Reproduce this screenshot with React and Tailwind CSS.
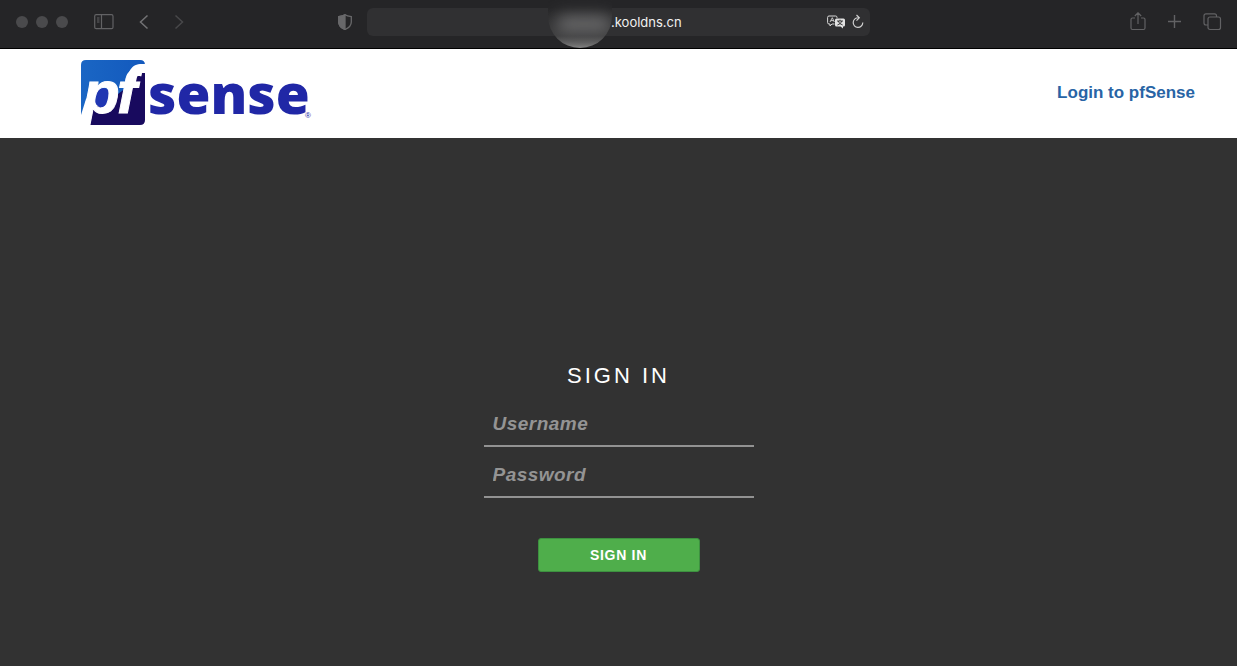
import React, { useState } from 'react';

function PfSenseLogo() {
  return (
    <svg className="h-[70px] w-[236px] overflow-visible" viewBox="0 0 236 70" role="img" aria-label="pfSense">
      <defs>
        <linearGradient id="tile" x1="0" y1="0" x2="1" y2="0">
          <stop offset="0" stopColor="#1a66c4" />
          <stop offset="1" stopColor="#1359bd" />
        </linearGradient>
      </defs>
      {/* tile */}
      <path d="M1 6 Q1 1 6 1 H60 Q65 1 65 6 V9 L50 24 L40 38 H10 L6 40 L1 56 Z" fill="url(#tile)" />
      <path d="M65 14 V61 Q65 66 60 66 H7 L11 46 L30 50 L34 38 L50 26 L54 14 Z" fill="#180a5e" />
      <ellipse cx="23" cy="39" rx="9" ry="10" fill="#2036b2" />
      {/* hook of the f, runs off the right edge */}
      <path d="M45 28 C48 12 51 5 62 5 H66 V13 H62 C57 13 57 19 55 28 Z" fill="#fff" />
      <g fontFamily="Liberation Sans, sans-serif" fontSize="60" fontWeight="700" fontStyle="italic" fill="#fff" stroke="#fff" strokeWidth="1">
        <text x="3" y="54">p</text>
        <text x="37" y="54">f</text>
      </g>
      <text x="68" y="55" fontFamily="Open Sans, sans-serif" fontSize="55" fontWeight="800" fill="#2027a6">sense</text>
      <text x="225" y="59" fontFamily="Liberation Sans, sans-serif" fontSize="8" fill="#2027a6">®</text>
    </svg>
  );
}

function ShieldIcon() {
  return (
    <svg className="h-4 w-4" viewBox="0 0 16 16" fill="none" stroke="#68686a" strokeWidth="1.3">
      <path d="M8 .8 C10 2.2 12 2.4 14.3 2.6 V8 C14.3 12 11.5 14 8 15.5 C4.5 14 1.7 12 1.7 8 V2.6 C4 2.4 6 2.2 8 .8 Z" />
      <path d="M8 .8 C6 2.2 4 2.4 1.7 2.6 V8 C1.7 12 4.5 14 8 15.5 Z" fill="#68686a" />
    </svg>
  );
}

function TranslateIcon() {
  return (
    <svg className="h-4 w-[18px]" viewBox="0 0 18 16" fill="none">
      <path d="M7.5 10 H5 L3 12 V10 H2 Q.6 10 .6 8.6 V3.4 Q.6 2 2 2 H8.6 Q10 2 10 3.4 V4" stroke="#d8d8d8" />
      <path d="M3 8 L5.3 3.7 L7.3 8 M4 6.6 H6.6" stroke="#d8d8d8" strokeWidth="0.9" />
      <path d="M9.5 4.5 H16.5 Q18 4.5 18 6 V11 Q18 12.5 16.5 12.5 H16 V14.5 L13.5 12.5 H9.5 Q8 12.5 8 11 V6 Q8 4.5 9.5 4.5 Z" fill="#e2e2e2" />
      <path d="M10 7 H16 M13 5.7 V7 M14.9 7 Q14 10 10.4 11 M11.2 7 Q12 10 15.7 11" stroke="#2c2c2e" strokeWidth="0.9" />
    </svg>
  );
}

function BrowserBar() {
  return (
    <header className="grid h-[49px] grid-cols-[1fr_503px_1fr] items-center border-b border-black bg-[#252527] pb-1 text-[#626264]">
      <div className="flex items-center justify-between pl-4 pr-[14px]">
        <div className="flex items-center">
          <div className="flex gap-2">
            <span className="h-3 w-3 rounded-full bg-[#4a4a4c]" />
            <span className="h-3 w-3 rounded-full bg-[#4a4a4c]" />
            <span className="h-3 w-3 rounded-full bg-[#4a4a4c]" />
          </div>
          <button type="button" aria-label="Sidebar" className="ml-[26px]">
            <svg className="h-4 w-5" viewBox="0 0 20 16" fill="none" stroke="currentColor" strokeWidth="1.2">
              <rect x="0.7" y="0.7" width="18.3" height="14" rx="1.5" />
              <path d="M7.5 1 V15 M3 4 H5.5 M3 6 H5.5 M3 8 H5.5" />
            </svg>
          </button>
          <button type="button" aria-label="Back" className="ml-6 text-[#737375]">
            <svg className="h-4 w-3" viewBox="0 0 12 16" fill="none" stroke="currentColor" strokeWidth="1.5">
              <path d="M9.5 1.5 L2.5 8 L9.5 14.5" />
            </svg>
          </button>
          <button type="button" aria-label="Forward" className="ml-6 text-[#48484a]">
            <svg className="h-4 w-3" viewBox="0 0 12 16" fill="none" stroke="currentColor" strokeWidth="1.5">
              <path d="M1.5 1.5 L8.5 8 L1.5 14.5" />
            </svg>
          </button>
        </div>
        <ShieldIcon />
      </div>

      <div className="relative flex h-7 items-center justify-end rounded-md bg-[#303032] pr-[6px]">
        {/* smudge over the start of the host name */}
        <div className="absolute -top-2 left-[181px] h-12 w-16 overflow-hidden rounded-b-full bg-linear-to-b from-[#252527] from-15% via-[#3c3c3d] via-75% to-[#808080]">
          <div className="absolute left-2 top-4 h-4 w-14 rounded-full bg-[#6c6c6d] blur-sm" />
        </div>
        <span className="absolute left-[244px] font-[Inter,sans-serif] text-[13px] leading-7 text-[#f0f0f0]">.kooldns.cn</span>
        <div className="flex items-center gap-[7px]">
          <TranslateIcon />
          <button type="button" aria-label="Reload">
            <svg className="h-4 w-3" viewBox="0 0 12 16" fill="none" stroke="#d0d0d0" strokeWidth="1.2">
              <path d="M6.5 3.8 A4.8 4.8 0 1 0 10.8 8.6 M4.5 1 L7.3 3.8 L4.5 6.6" />
            </svg>
          </button>
        </div>
      </div>

      <div className="flex items-center justify-end gap-5 pr-[15px]">
        <button type="button" aria-label="Share">
          <svg className="h-5 w-4" viewBox="0 0 16 20" fill="none" stroke="currentColor" strokeWidth="1.2">
            <path d="M5 6 H2.5 Q1 6 1 7.5 V16 Q1 17.5 2.5 17.5 H13.5 Q15 17.5 15 16 V7.5 Q15 6 13.5 6 H11 M8 12 V1 M4.8 4 L8 .8 L11.2 4" />
          </svg>
        </button>
        <button type="button" aria-label="New tab">
          <svg className="h-4 w-4" viewBox="0 0 16 16" fill="none" stroke="currentColor" strokeWidth="1.4">
            <path d="M8.5 1 V14 M2 7.5 H15" />
          </svg>
        </button>
        <button type="button" aria-label="Tab overview">
          <svg className="h-[18px] w-5" viewBox="0 0 20 18" fill="none" stroke="currentColor" strokeWidth="1.2">
            <path d="M6 12 H4 Q2 12 2 10 V2.8 Q2 .8 4 .8 H12.5 Q14.5 .8 14.5 2.8 V4" />
            <rect x="6" y="4" width="12.5" height="12.5" rx="2" />
          </svg>
        </button>
      </div>
    </header>
  );
}

function App() {
  const [username, setUsername] = useState('');
  const [password, setPassword] = useState('');

  const handleSubmit = (e) => {
    e.preventDefault();
  };

  const fieldClass =
    'block h-9 w-full border-b-2 border-[#929292] bg-transparent px-[9px] pb-2 text-[19px] font-bold italic tracking-wide text-[#ddd] placeholder:text-[#949494] focus:outline-none';

  return (
    <div className="flex min-h-screen flex-col bg-[#323232] font-['Liberation_Sans',Arial,sans-serif]">
      <BrowserBar />
      <div className="flex h-[89px] items-center justify-between bg-white pl-20 pr-[42px]">
        <PfSenseLogo />
        <a href="#login" className="pb-[2px] text-[17px] font-bold text-[#2864a5]">Login to pfSense</a>
      </div>

      <main className="flex flex-1 justify-center pt-[222px]">
        <form onSubmit={handleSubmit} className="flex w-[270px] flex-col items-center">
          <h1 className="text-[22px] leading-8 tracking-[3px] text-white">SIGN IN</h1>
          <label htmlFor="username" className="mt-[19px] block w-full">
            <input
              id="username"
              type="text"
              aria-label="Username"
              placeholder="Username"
              className={fieldClass}
              value={username}
              onChange={(e) => setUsername(e.target.value)}
            />
          </label>
          <label htmlFor="password" className="mt-[15px] block w-full">
            <input
              id="password"
              type="password"
              aria-label="Password"
              placeholder="Password"
              className={fieldClass}
              value={password}
              onChange={(e) => setPassword(e.target.value)}
            />
          </label>
          <button
            type="submit"
            className="mt-10 h-[34px] w-[162px] rounded-[3px] border border-[#3d9140] bg-[#4fae4b] text-sm font-bold tracking-wider text-white"
          >
            SIGN IN
          </button>
        </form>
      </main>
    </div>
  );
}

export default App;
